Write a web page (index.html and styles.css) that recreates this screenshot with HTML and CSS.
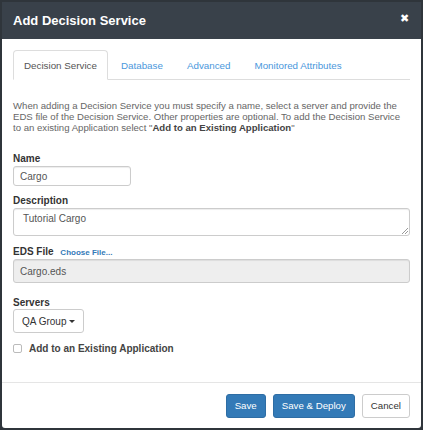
FILE: index.html
```
<!DOCTYPE html>
<html>
<head>
<meta charset="utf-8">
<link rel="stylesheet" href="styles.css">
</head>
<body>
<div class="dialog">
  <div class="header">
    <div class="title">Add Decision Service</div>
    <div class="close">&#x2716;</div>
  </div>
  <div class="content">
    <div class="tabs">
      <div class="tab active">Decision Service</div>
      <div class="tab">Database</div>
      <div class="tab">Advanced</div>
      <div class="tab">Monitored Attributes</div>
    </div>
    <p class="intro">When adding a Decision Service you must specify a name, select a server and provide the EDS file of the Decision Service. Other properties are optional. To add the Decision Service to an existing Application select "<b>Add to an Existing Application</b>"</p>
    <div class="field first">
      <div class="label">Name</div>
      <div class="input short">Cargo</div>
    </div>
    <div class="field desc">
      <div class="label">Description</div>
      <div class="input area">Tutorial Cargo<span class="grip"></span></div>
    </div>
    <div class="field eds">
      <div class="label tight">EDS File <span class="choose">Choose File...</span></div>
      <div class="input disabled">Cargo.eds</div>
    </div>
    <div class="field servers">
      <div class="label tight">Servers</div>
      <div class="dropdown">QA Group <span class="caret"></span></div>
    </div>
    <div class="check">
      <span class="box"></span>
      <span class="check-label">Add to an Existing Application</span>
    </div>
  </div>
  <div class="footer">
    <div class="btn primary">Save</div>
    <div class="btn primary">Save &amp; Deploy</div>
    <div class="btn">Cancel</div>
  </div>
</div>
</body>
</html>
```
FILE: styles.css
```
* { box-sizing: border-box; }
html, body {
  margin: 0;
  padding: 0;
  background: #2f353b;
  font-family: "Liberation Sans", Arial, sans-serif;
}
.dialog {
  margin: 2px 2px 0 2px;
  width: 419px;
  height: 426px;
  background: #fff;
  display: flex;
  flex-direction: column;
  border-radius: 0 0 3px 3px;
}
.header {
  height: 37px;
  background: #39414a;
  display: flex;
  align-items: center;
  justify-content: space-between;
  padding: 0 12px 0 11px;
}
.title {
  color: #fff;
  font-weight: bold;
  font-size: 13px;
}
.close {
  color: #fff;
  font-size: 11px;
  margin-top: -4px;
}
.content {
  padding: 11px 11px 0 11px;
  flex: 1;
}
.tabs {
  display: flex;
  height: 30px;
  border-bottom: 1px solid #ddd;
}
.tab {
  height: 30px;
  padding: 0 10px;
  margin-right: 2px;
  display: flex;
  align-items: center;
  font-size: 9.8px;
  color: #4a97dc;
  border: 1px solid transparent;
  border-radius: 4px 4px 0 0;
}
.tab.active {
  color: #555;
  border-color: #ddd;
  border-bottom-color: #fff;
  background: #fff;
  margin-bottom: -1px;
}
.intro {
  margin: 20px 0 0 0;
  font-size: 9.6px;
  line-height: 11px;
  color: #666;
}
.intro b { color: #444; }
.field.first { margin-top: 20px; }
.field.desc { margin-top: 9px; }
.field.eds { margin-top: 10px; }
.field.servers { margin-top: 14px; }
.label {
  font-size: 10px;
  font-weight: bold;
  color: #333;
  margin-bottom: 1px;
  line-height: 12px;
}
.label.tight { margin-bottom: 0; }
.choose {
  color: #337ab7;
  font-size: 8px;
  margin-left: 4px;
}
.input {
  border: 1px solid #ccc;
  border-radius: 3px;
  font-size: 10px;
  color: #555;
  height: 20px;
  padding: 0 6px;
  display: flex;
  align-items: center;
  box-shadow: inset 0 1px 1px rgba(0,0,0,0.075);
}
.input.short { width: 118px; }
.input.area {
  height: 28px;
  align-items: flex-start;
  padding: 4px 9px 0 9px;
  position: relative;
}
.grip {
  position: absolute;
  right: 1px;
  bottom: 1px;
  width: 6px;
  height: 6px;
  background: linear-gradient(135deg, transparent 45%, #999 45%, #999 55%, transparent 55%, transparent 70%, #999 70%, #999 80%, transparent 80%);
}
.input.disabled {
  background: #eee;
  height: 24px;
  padding: 0 6px;
}
.dropdown {
  display: inline-flex;
  align-items: center;
  height: 24px;
  padding: 0 8px 0 8px;
  border: 1px solid #ccc;
  border-radius: 3px;
  font-size: 10px;
  color: #333;
  white-space: nowrap;
}
.caret {
  display: inline-block;
  width: 0;
  height: 0;
  margin-left: 3px;
  border-top: 3px solid #333;
  border-left: 3px solid transparent;
  border-right: 3px solid transparent;
}
.check {
  display: flex;
  align-items: center;
  margin-top: 9px;
  height: 12px;
}
.box {
  width: 9px;
  height: 9px;
  border: 1px solid #bbb;
  border-radius: 2px;
  margin-right: 7px;
}
.check-label {
  font-size: 10px;
  font-weight: bold;
  color: #444;
}
.footer {
  border-top: 1px solid #e5e5e5;
  height: 46px;
  display: flex;
  justify-content: flex-end;
  align-items: center;
  gap: 7px;
  padding: 0 11px 0 0;
}
.btn {
  height: 24px;
  padding: 0 8px;
  display: flex;
  align-items: center;
  font-size: 9.7px;
  border-radius: 3px;
  border: 1px solid #ccc;
  color: #333;
  background: #fff;
}
.btn.primary {
  background: #337ab7;
  border-color: #2e6da4;
  color: #fff;
}
```
